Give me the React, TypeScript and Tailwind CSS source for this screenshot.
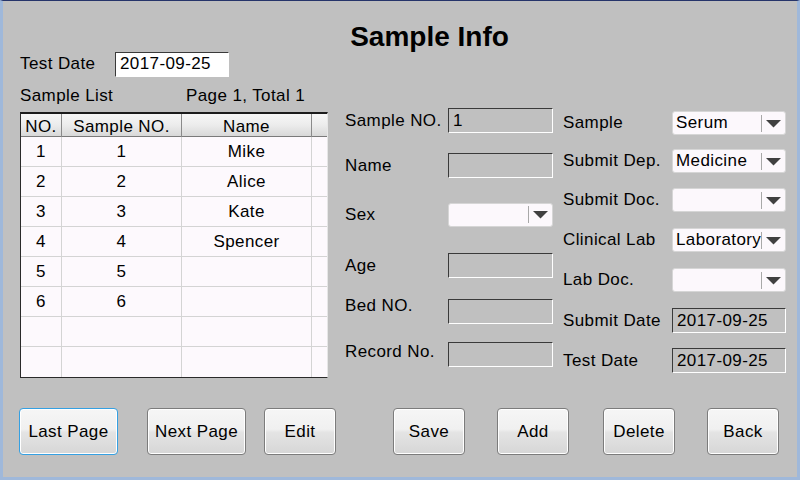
import React from 'react';

// One row of the sample list
interface SampleRow {
  no: string;
  sampleNo: string;
  name: string;
}

const rows: SampleRow[] = [
  { no: '1', sampleNo: '1', name: 'Mike' },
  { no: '2', sampleNo: '2', name: 'Alice' },
  { no: '3', sampleNo: '3', name: 'Kate' },
  { no: '4', sampleNo: '4', name: 'Spencer' },
  { no: '5', sampleNo: '5', name: '' },
  { no: '6', sampleNo: '6', name: '' },
  { no: '', sampleNo: '', name: '' },
  { no: '', sampleNo: '', name: '' },
];

const Arrow = () => (
  <svg width="15" height="8" viewBox="0 0 15 8">
    <polygon points="0,0 15,0 7.5,7.5" fill="#404040" />
  </svg>
);

// Sunken text box, grey when read-only
const Field = ({ value = '', white = false, w = 'w-[105px]' }: { value?: string; white?: boolean; w?: string }) => (
  <div
    className={`${w} h-[25px] flex items-center pl-[4px] border border-t-[#3a3a3a] border-l-[#3a3a3a] border-b-white border-r-white ${white ? 'bg-white' : 'bg-[#c0c0c0]'}`}
  >
    {value}
  </div>
);

const Combo = ({ value = '', w = 'w-[114px]' }: { value?: string; w?: string }) => (
  <div className={`${w} h-[24px] flex items-center rounded-[3px] border border-[#d6d6d6] bg-[#fcf8fc]`}>
    <div className="flex-1 overflow-hidden whitespace-nowrap pl-[3px]">{value}</div>
    <div className="h-[17px] w-px bg-[#a8a8a8]" />
    <div className="w-[23px] flex justify-center pt-[1px]">
      <Arrow />
    </div>
  </div>
);

const Button = ({ label, w = 'w-[72px]', focused = false, className = '' }: { label: string; w?: string; focused?: boolean; className?: string }) => (
  <button
    className={`${w} h-[47px] rounded-[4px] border ${focused ? 'border-[#35a0e2]' : 'border-[#7c7c7c]'} shadow-[inset_0_0_0_1px_#ffffff] bg-[linear-gradient(to_bottom,#f6f6f6_0%,#f0f0f0_45%,#e4e4e4_52%,#d6d6d6_100%)] text-black ${className}`}
  >
    {label}
  </button>
);

const SampleInfo: React.FC = () => {
  return (
    <div className="w-[800px] h-[480px] flex flex-col bg-[#c0c0c0] border-t border-t-[#26346a] border-x-[3px] border-x-[#9fb8da] border-b-[3px] border-b-[#9fb8da] text-[17px] tracking-[0.4px] text-black font-['Liberation_Sans',Arial,sans-serif]">
      <div className="mt-[22px] h-[28px] leading-[28px] flex justify-center pl-[59px]">
        <h1 className="text-[28px] font-bold tracking-normal">Sample Info</h1>
      </div>

      <div className="mt-[1px] flex">
        {/* left: date and list */}
        <div className="ml-[17px] w-[308px] flex flex-col">
          <div className="h-[24px] flex items-center">
            <span className="w-[95px]">Test Date</span>
            <Field value="2017-09-25" white w="w-[114px]" />
          </div>
          <div className="mt-[10px] h-[20px] leading-[20px] flex">
            <span className="w-[166px]">Sample List</span>
            <span>Page 1, Total 1</span>
          </div>
          <div className="mt-[6px] flex flex-col border-t-2 border-t-[#1c1c1c] border-l border-l-[#2a2a2a] border-b border-b-[#2a2a2a] border-r border-r-[#e6e6e6] bg-[#fdf9fd]">
            <div className="h-[23px] grid grid-cols-[41px_120px_130px_1fr] border-b border-b-[#7a7a7a] bg-[linear-gradient(to_bottom,#f7f7f7_0%,#ececec_50%,#d8d8d8_100%)]">
              <div className="flex items-center justify-center border-r border-r-[#8a8a8a]">NO.</div>
              <div className="flex items-center justify-center border-r border-r-[#8a8a8a]">Sample NO.</div>
              <div className="flex items-center justify-center border-r border-r-[#8a8a8a]">Name</div>
              <div />
            </div>
            {rows.map((r, i) => (
              <div
                key={i}
                className={`h-[30px] grid grid-cols-[41px_120px_130px_1fr] ${i < rows.length - 1 ? 'border-b border-b-[#d4d4d4]' : ''}`}
              >
                <div className="flex items-center justify-center border-r border-r-[#d4d4d4]">{r.no}</div>
                <div className="flex items-center justify-center border-r border-r-[#d4d4d4]">{r.sampleNo}</div>
                <div className="flex items-center justify-center border-r border-r-[#d4d4d4]">{r.name}</div>
                <div />
              </div>
            ))}
          </div>
        </div>

        {/* middle: patient fields */}
        <div className="ml-[17px] flex flex-col pt-[56px]">
          <div className="h-[25px] flex items-center">
            <span className="w-[103px]">Sample NO.</span>
            <Field value="1" />
          </div>
          <div className="mt-[20px] h-[25px] flex items-center">
            <span className="w-[103px]">Name</span>
            <Field />
          </div>
          <div className="mt-[24px] h-[25px] flex items-center">
            <span className="w-[103px]">Sex</span>
            <Combo w="w-[105px]" />
          </div>
          <div className="mt-[26px] h-[25px] flex items-center">
            <span className="w-[103px]">Age</span>
            <Field />
          </div>
          <div className="mt-[21px] h-[25px] flex items-center">
            <span className="w-[103px] mb-[11px]">Bed NO.</span>
            <Field />
          </div>
          <div className="mt-[18px] h-[25px] flex items-center">
            <span className="w-[103px] mb-[6px]">Record No.</span>
            <Field />
          </div>
        </div>

        {/* right: lab fields */}
        <div className="ml-[10px] flex flex-col pt-[59px]">
          <div className="h-[24px] flex items-center">
            <span className="w-[109px]">Sample</span>
            <Combo value="Serum" />
          </div>
          <div className="mt-[14px] h-[24px] flex items-center">
            <span className="w-[109px]">Submit Dep.</span>
            <Combo value="Medicine" />
          </div>
          <div className="mt-[15px] h-[24px] flex items-center">
            <span className="w-[109px]">Submit Doc.</span>
            <Combo />
          </div>
          <div className="mt-[16px] h-[24px] flex items-center">
            <span className="w-[109px]">Clinical Lab</span>
            <Combo value="Laboratory" />
          </div>
          <div className="mt-[16px] h-[24px] flex items-center">
            <span className="w-[109px]">Lab Doc.</span>
            <Combo />
          </div>
          <div className="mt-[16px] h-[25px] flex items-center">
            <span className="w-[109px]">Submit Date</span>
            <Field value="2017-09-25" w="w-[114px]" />
          </div>
          <div className="mt-[15px] h-[25px] flex items-center">
            <span className="w-[109px]">Test Date</span>
            <Field value="2017-09-25" w="w-[114px]" />
          </div>
        </div>
      </div>

      <div className="mt-[30px] flex">
        <Button label="Last Page" w="w-[99px]" focused className="ml-[16px]" />
        <Button label="Next Page" w="w-[99px]" className="ml-[29px]" />
        <Button label="Edit" className="ml-[18px]" />
        <Button label="Save" className="ml-[57px]" />
        <Button label="Add" className="ml-[32px]" />
        <Button label="Delete" className="ml-[34px]" />
        <Button label="Back" className="ml-[32px]" />
      </div>
    </div>
  );
};

export default SampleInfo;
